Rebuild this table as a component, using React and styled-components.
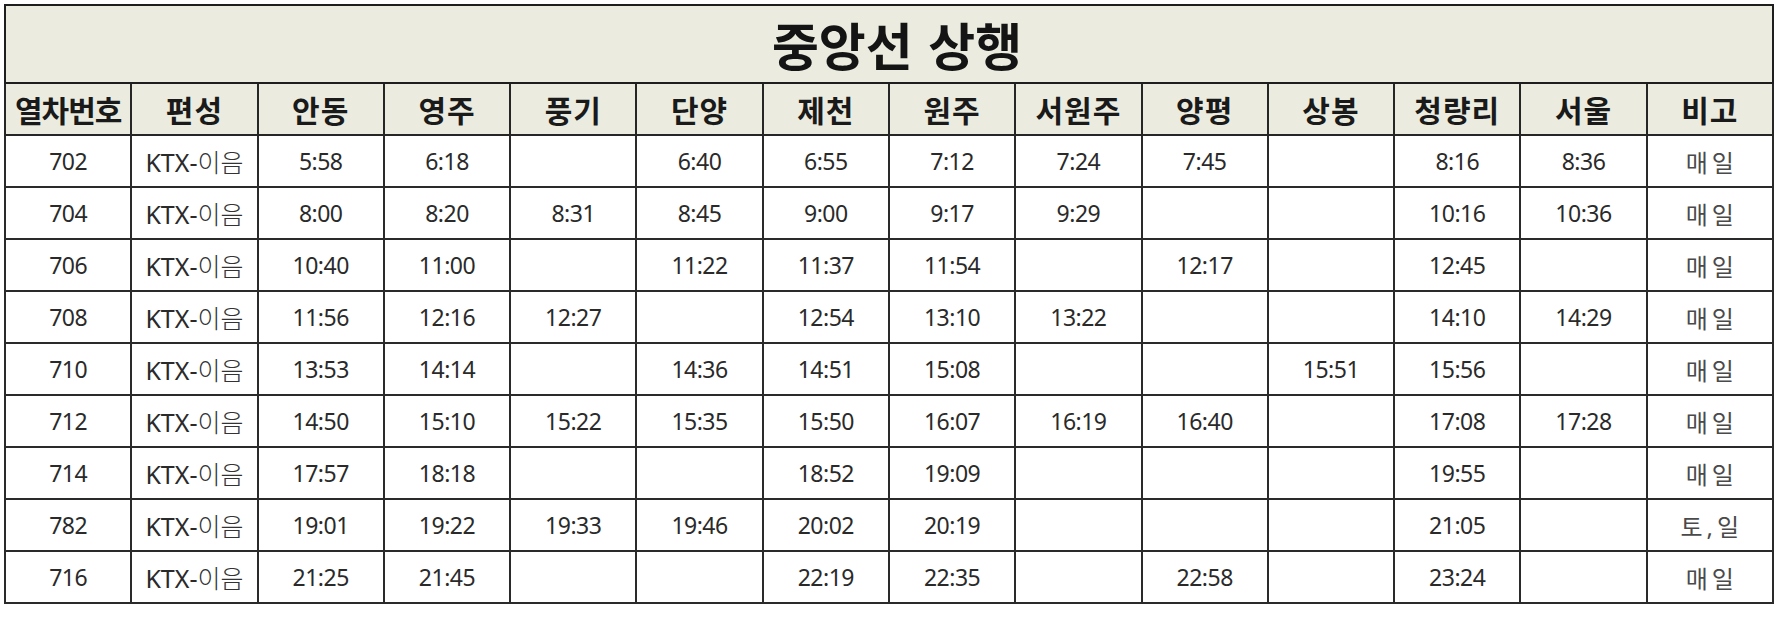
import React from "react";
import styled, { createGlobalStyle } from "styled-components";

const Global = createGlobalStyle`
  html, body { margin: 0; padding: 0; background: #ffffff; }
  body { font-family: "Noto Sans", "Noto Sans CJK KR", sans-serif; }
`;

const Page = styled.div`
  padding: 4px 0 0 4px;
`;

const Table = styled.table`
  width: 1770px;
  table-layout: fixed;
  border-collapse: collapse;
  border: 2px solid #1e1e1e;
`;

const TitleCell = styled.th`
  height: 76px;
  background: #ebecdf;
  border: 2px solid #1e1e1e;
  font-family: "Noto Sans CJK KR", sans-serif;
  font-weight: 700;
  font-size: 51px;
  word-spacing: 4px;
  color: #141414;
  text-align: center;
  vertical-align: middle;
  padding: 0 0 0 16px;
  line-height: 1;
`;

const HeadCell = styled.th`
  height: 50px;
  background: #ebecdf;
  border: 2px solid #262626;
  font-family: "Noto Sans CJK KR", sans-serif;
  font-weight: 700;
  font-size: 30px;
  letter-spacing: ${(p) => (p.$tight ? "-1px" : "1px")};
  color: #1a1a1a;
  text-align: center;
  padding: 0;
  white-space: nowrap;
  overflow: hidden;
`;

const Cell = styled.td`
  height: 50px;
  border: 2px solid #2a2a2a;
  font-family: "Noto Sans", "Noto Sans CJK KR", sans-serif;
  font-size: ${(p) => (p.$note ? "24px" : "23px")};
  color: ${(p) => (p.$note ? "#4a4a4a" : "#2a2a2a")};
  font-weight: 400;
  text-align: center;
  padding: 0;
  white-space: nowrap;
  letter-spacing: ${(p) => (p.$note ? "4px" : "-0.5px")};
  text-indent: ${(p) => (p.$note ? "4px" : "0")};
`;

const Fleet = styled.span`
  font-size: 25px;
  letter-spacing: 0;
  color: #2a2a2a;
`;

const Kor = styled.span`
  font-family: "Noto Sans CJK KR", sans-serif;
  font-weight: 300;
  font-size: 25px;
  color: #333;
`;

const stations = ["안동", "영주", "풍기", "단양", "제천", "원주", "서원주", "양평", "상봉", "청량리", "서울"];

const rows = [
  ["702", "5:58", "6:18", "", "6:40", "6:55", "7:12", "7:24", "7:45", "", "8:16", "8:36", "매일"],
  ["704", "8:00", "8:20", "8:31", "8:45", "9:00", "9:17", "9:29", "", "", "10:16", "10:36", "매일"],
  ["706", "10:40", "11:00", "", "11:22", "11:37", "11:54", "", "12:17", "", "12:45", "", "매일"],
  ["708", "11:56", "12:16", "12:27", "", "12:54", "13:10", "13:22", "", "", "14:10", "14:29", "매일"],
  ["710", "13:53", "14:14", "", "14:36", "14:51", "15:08", "", "", "15:51", "15:56", "", "매일"],
  ["712", "14:50", "15:10", "15:22", "15:35", "15:50", "16:07", "16:19", "16:40", "", "17:08", "17:28", "매일"],
  ["714", "17:57", "18:18", "", "", "18:52", "19:09", "", "", "", "19:55", "", "매일"],
  ["782", "19:01", "19:22", "19:33", "19:46", "20:02", "20:19", "", "", "", "21:05", "", "토,일"],
  ["716", "21:25", "21:45", "", "", "22:19", "22:35", "", "22:58", "", "23:24", "", "매일"],
];

export default function App() {
  return (
    <Page>
      <Global />
      <Table>
        <thead>
          <tr>
            <TitleCell colSpan={14}>중앙선 상행</TitleCell>
          </tr>
          <tr>
            <HeadCell $tight>열차번호</HeadCell>
            <HeadCell>편성</HeadCell>
            {stations.map((s) => (
              <HeadCell key={s}>{s}</HeadCell>
            ))}
            <HeadCell>비고</HeadCell>
          </tr>
        </thead>
        <tbody>
          {rows.map((r) => (
            <tr key={r[0]}>
              <Cell>{r[0]}</Cell>
              <Cell>
                <Fleet>
                  KTX-<Kor>이음</Kor>
                </Fleet>
              </Cell>
              {r.slice(1, 12).map((t, i) => (
                <Cell key={i}>{t}</Cell>
              ))}
              <Cell $note>{r[12]}</Cell>
            </tr>
          ))}
        </tbody>
      </Table>
    </Page>
  );
}
